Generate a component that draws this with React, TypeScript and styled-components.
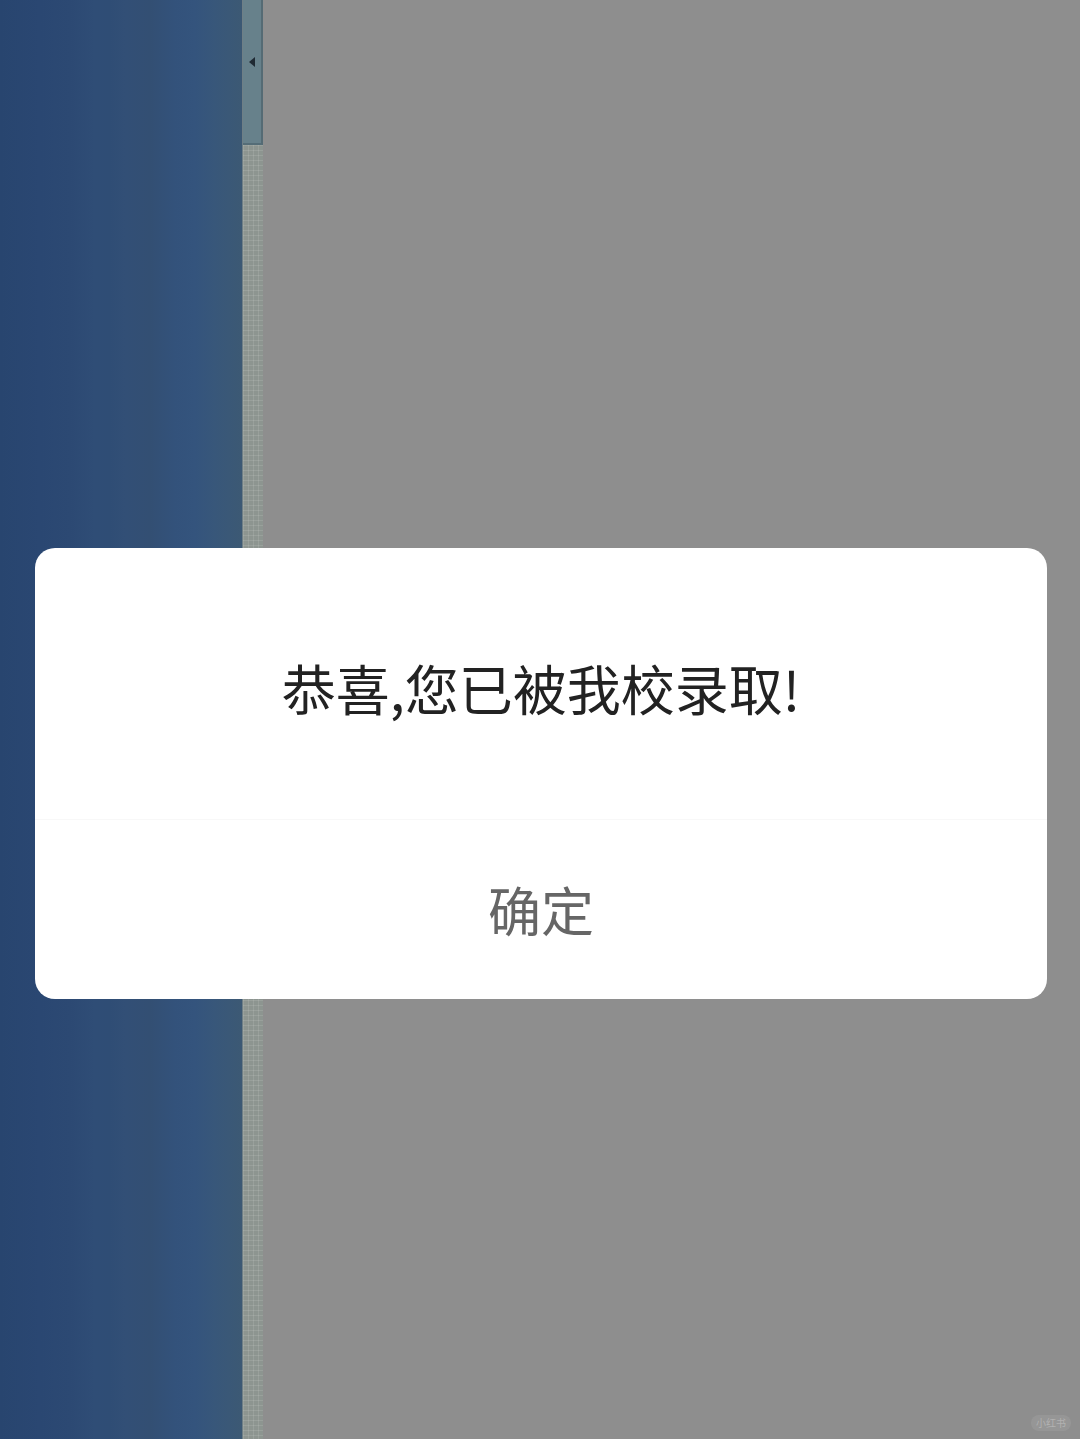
import React from "react";
import styled, { createGlobalStyle } from "styled-components";

const GlobalStyle = createGlobalStyle`
  html, body {
    margin: 0;
    padding: 0;
    width: 1080px;
    height: 1439px;
    overflow: hidden;
    background: #8e8e8e;
  }
  body {
    font-family: "Noto Sans CJK SC", "Noto Sans", sans-serif;
  }
`;

const Screen = styled.div`
  position: relative;
  display: flex;
  width: 1080px;
  height: 1439px;
  overflow: hidden;
`;

const SidePanel = styled.div`
  width: 242px;
  flex: none;
  background: linear-gradient(
    to right,
    #28456f 0px,
    #2a4772 40px,
    #2c4973 70px,
    #2f4d76 95px,
    #2f4d75 110px,
    #324f76 125px,
    #334f73 150px,
    #33527b 175px,
    #34547d 195px,
    #38577a 215px,
    #3c5974 242px
  );
`;

const ScrollTrack = styled.div`
  width: 20px;
  flex: none;
  display: flex;
  flex-direction: column;
  background-color: #8d9590;
  background-image: linear-gradient(rgba(255, 255, 255, 0.1) 1px, transparent 1px),
    linear-gradient(90deg, rgba(255, 255, 255, 0.1) 1px, transparent 1px);
  background-size: 5px 5px;
  border-left: 1px solid #6f7f86;
`;

const ScrollThumb = styled.div`
  height: 145px;
  display: flex;
  justify-content: center;
  padding-top: 56px;
  box-sizing: border-box;
  background: #67818b;
  border-right: 2px solid #556b74;
  border-bottom: 2px solid #556d77;
`;

const Backdrop = styled.div`
  flex: 1;
  background: #8e8e8e;
`;

const Dialog = styled.div`
  position: absolute;
  left: 35px;
  top: 548px;
  width: 1012px;
  height: 451px;
  display: flex;
  flex-direction: column;
  background: #ffffff;
  border-radius: 20px;
  overflow: hidden;
`;

const Message = styled.div`
  height: 272px;
  display: flex;
  align-items: center;
  justify-content: center;
  padding-top: 8px;
  box-sizing: border-box;
  font-size: 54px;
  color: #222222;
  border-bottom: 1px solid #f8f8f8;
`;

const Confirm = styled.div`
  flex: 1;
  display: flex;
  align-items: center;
  justify-content: center;
  padding-bottom: 2px;
  font-size: 53px;
  color: #666666;
`;

const Watermark = styled.div`
  position: absolute;
  right: 9px;
  bottom: 8px;
  padding: 1px 5px;
  border-radius: 10px;
  background: rgba(255, 255, 255, 0.08);
  color: rgba(255, 255, 255, 0.28);
  font-size: 10px;
  line-height: 14px;
`;

export default function App() {
  return (
    <>
      <GlobalStyle />
      <Screen>
        <SidePanel />
        <ScrollTrack>
          <ScrollThumb>
            <svg width="8" height="12" viewBox="0 0 8 12">
              <path d="M7 1 L1 6 L7 11 Z" fill="#1f2a33" />
            </svg>
          </ScrollThumb>
        </ScrollTrack>
        <Backdrop />
        <Dialog>
          <Message>恭喜,您已被我校录取!</Message>
          <Confirm>确定</Confirm>
        </Dialog>
        <Watermark>小红书</Watermark>
      </Screen>
    </>
  );
}
